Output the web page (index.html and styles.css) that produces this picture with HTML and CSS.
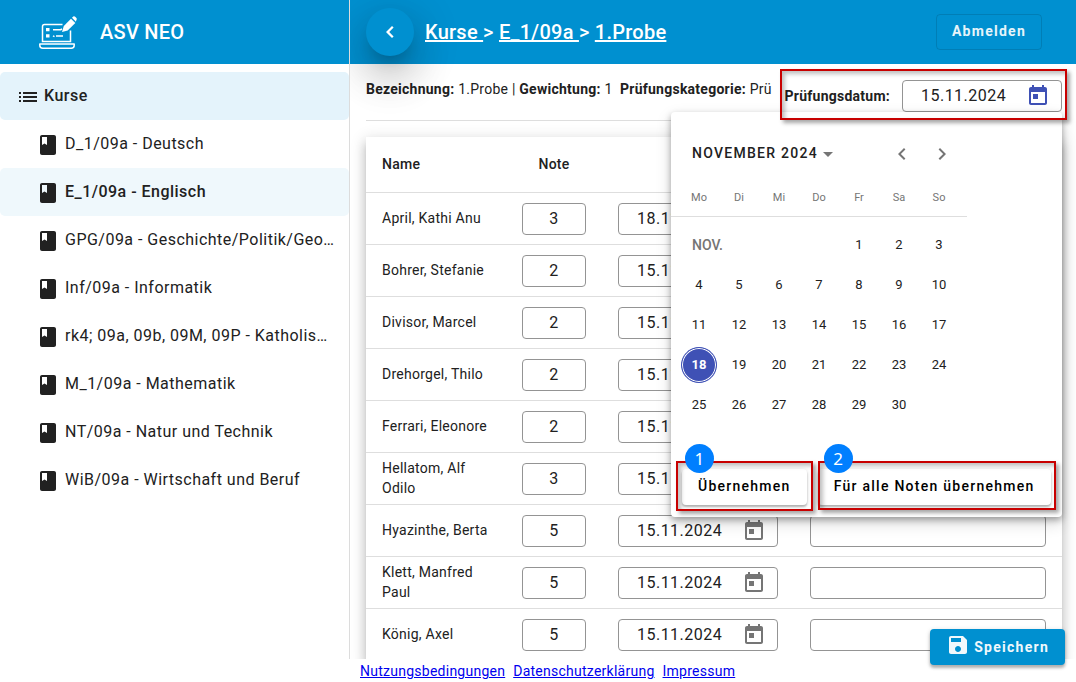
FILE: index.html
```html
<!DOCTYPE html>
<html lang="de">
<head>
<meta charset="utf-8">
<meta name="viewport" content="width=device-width, initial-scale=1">
<title>ASV NEO</title>
<link rel="stylesheet" href="styles.css">
</head>
<body>
<svg class="sprite" aria-hidden="true">
  <symbol id="book" viewBox="0 0 24 24"><path d="M18 2H6c-1.1 0-2 .9-2 2v16c0 1.1.9 2 2 2h12c1.1 0 2-.9 2-2V4c0-1.1-.9-2-2-2zM6 4h5v8l-2.500-1.500L6 12V4z"/></symbol>
  <symbol id="today" viewBox="0 0 24 24"><path d="M19 3h-1V1h-2v2H8V1H6v2H5c-1.110 0-1.990.9-1.990 2L3 19c0 1.100.890 2 2 2h14c1.100 0 2-.9 2-2V5c0-1.100-.9-2-2-2zm0 16H5V8h14v11zM7 10h5v5H7z"/></symbol>
</svg>
<div class="app">
  <aside class="sidebar">
    <header class="brand">
      <svg class="logo" viewBox="0 0 38 33" width="38" height="33" fill="none" stroke="#fff" aria-hidden="true">
        <path d="M23.500 8.500H5.500a2 2 0 0 0-2 2V25.500H31.500V14.500" stroke-width="1.500"/>
        <path d="M.8 28H35.200V29.200a3 3 0 0 1-3 3H3.800a3 3 0 0 1-3-3z" stroke-width="1.500" stroke-linejoin="round"/>
        <path d="M7 12h3.500v3.200H7zM7 18.200h3.500v3.200H7z" fill="#fff" stroke="none"/>
        <path d="M14 13.700h8M14 19.900l1.500.8M17 19.900h7M21.500 13.700l1.500-.7" stroke-width="1.500"/>
        <path d="M23 16l1.800-6L32 2.800l4.300 4.300-7.600 7.400z" fill="#fff" stroke="none"/>
        <path d="M33 1.800l1.200-1.200q1-.8 2 .1l1.200 1.200q.8 1 0 2L36.900 5.700z" fill="#fff" stroke="none"/>
      </svg>
      <span class="brand-name">ASV NEO</span>
    </header>
    <nav class="nav" aria-label="Kurse">
      <a class="nav-item nav-root" href="#"><svg class="icon" viewBox="0 0 24 24"><path d="M3 13h2v-2H3v2zm0 4h2v-2H3v2zm0-8h2V7H3v2zm4 4h14v-2H7v2zm0 4h14v-2H7v2zM7 7v2h14V7H7z"/></svg><span class="nav-text">Kurse</span></a>
      <a class="nav-item" href="#"><svg class="icon"><use href="#book"/></svg><span class="nav-text">D_1/09a - Deutsch</span></a>
      <a class="nav-item active" href="#"><svg class="icon"><use href="#book"/></svg><span class="nav-text">E_1/09a - Englisch</span></a>
      <a class="nav-item" href="#"><svg class="icon"><use href="#book"/></svg><span class="nav-text">GPG/09a - Geschichte/Politik/Geo…</span></a>
      <a class="nav-item" href="#"><svg class="icon"><use href="#book"/></svg><span class="nav-text">Inf/09a - Informatik</span></a>
      <a class="nav-item" href="#"><svg class="icon"><use href="#book"/></svg><span class="nav-text">rk4; 09a, 09b, 09M, 09P - Katholis…</span></a>
      <a class="nav-item" href="#"><svg class="icon"><use href="#book"/></svg><span class="nav-text">M_1/09a - Mathematik</span></a>
      <a class="nav-item" href="#"><svg class="icon"><use href="#book"/></svg><span class="nav-text">NT/09a - Natur und Technik</span></a>
      <a class="nav-item" href="#"><svg class="icon"><use href="#book"/></svg><span class="nav-text">WiB/09a - Wirtschaft und Beruf</span></a>
    </nav>
  </aside>
  <div class="content">
    <header class="topbar">
      <button class="fab" type="button" aria-label="Zurück"><svg class="icon" viewBox="0 0 24 24"><path d="M15.600 7.600L14 6 8 12l6 6 1.600-1.600L11.200 12z"/></svg></button>
      <div class="crumbs"><a href="#">Kurse&nbsp;</a>&gt; <a href="#">E_1/09a&nbsp;</a>&gt; <a href="#">1.Probe</a></div>
      <button class="logout" type="button">Abmelden</button>
    </header>
    <main class="main">
      <div class="info">
        <p class="info-text"><b>Bezeichnung:</b> 1.Probe | <b>Gewichtung:</b> 1 &nbsp;<b>Prüfungskategorie:</b> Prü</p>
        <div class="exam">
          <label class="exam-label" for="exam-date">Prüfungsdatum:</label>
          <div class="date-field open">
            <input class="date-input" id="exam-date" type="text" value="15.11.2024">
            <button class="icon-button" type="button" aria-label="Kalender öffnen"><svg class="icon"><use href="#today"/></svg></button>
          </div>
          <span class="frame frame-date"></span>
          <section class="picker" aria-label="Datum wählen">
            <div class="picker-head">
              <button class="period" type="button">NOVEMBER 2024<svg viewBox="0 0 10 5" width="10" height="5"><path d="M0 0h10L5 5z"/></svg></button>
              <button class="icon-button" type="button" aria-label="Vorheriger Monat"><svg class="icon" viewBox="0 0 24 24"><path d="M15.410 7.410L14 6l-6 6 6 6 1.410-1.410L10.830 12z"/></svg></button>
              <button class="icon-button" type="button" aria-label="Nächster Monat"><svg class="icon" viewBox="0 0 24 24"><path d="M10 6L8.590 7.410 13.170 12l-4.580 4.590L10 18l6-6z"/></svg></button>
            </div>
            <table class="calendar">
              <thead><tr><th>Mo</th><th>Di</th><th>Mi</th><th>Do</th><th>Fr</th><th>Sa</th><th>So</th></tr></thead>
              <tbody>
                <tr><td class="month" colspan="4">NOV.</td><td><button type="button">1</button></td><td><button type="button">2</button></td><td><button type="button">3</button></td></tr>
                <tr><td><button type="button">4</button></td><td><button type="button">5</button></td><td><button type="button">6</button></td><td><button type="button">7</button></td><td><button type="button">8</button></td><td><button type="button">9</button></td><td><button type="button">10</button></td></tr>
                <tr><td><button type="button">11</button></td><td><button type="button">12</button></td><td><button type="button">13</button></td><td><button type="button">14</button></td><td><button type="button">15</button></td><td><button type="button">16</button></td><td><button type="button">17</button></td></tr>
                <tr><td><button class="selected" type="button">18</button></td><td><button type="button">19</button></td><td><button type="button">20</button></td><td><button type="button">21</button></td><td><button type="button">22</button></td><td><button type="button">23</button></td><td><button type="button">24</button></td></tr>
                <tr><td><button type="button">25</button></td><td><button type="button">26</button></td><td><button type="button">27</button></td><td><button type="button">28</button></td><td><button type="button">29</button></td><td><button type="button">30</button></td><td></td></tr>
              </tbody>
            </table>
            <div class="actions">
              <div class="action"><button class="raised" type="button">Übernehmen</button><span class="frame frame-one"></span><span class="badge">1</span></div>
              <div class="action"><button class="raised" type="button">Für alle Noten übernehmen</button><span class="frame frame-two"></span><span class="badge">2</span></div>
            </div>
          </section>
        </div>
      </div>
      <div class="card">
        <table class="grades">
          <colgroup><col class="col-name"><col class="col-note"><col class="col-date"><col></colgroup>
          <thead><tr><th>Name</th><th class="center">Note</th><th aria-label="Datum"></th><th aria-label="Bemerkung"></th></tr></thead>
          <tbody id="rows"></tbody>
        </table>
      </div>
    </main>
  </div>
  <footer class="footer"><a href="#">Nutzungsbedingungen</a><a href="#">Datenschutzerklärung</a><a href="#">Impressum</a></footer>
  <button class="save" type="button"><svg class="icon" viewBox="0 0 24 24"><path d="M17 3H5c-1.110 0-2 .9-2 2v14c0 1.100.890 2 2 2h14c1.100 0 2-.9 2-2V7l-4-4zm-5 16c-1.660 0-3-1.340-3-3s1.340-3 3-3 3 1.340 3 3-1.340 3-3 3zm3-10H5V5h10v4z"/></svg>Speichern</button>
</div>
<script src="app.js"></script>
</body>
</html>
```
FILE: styles.css
```css
:root {
  --blue: #0090d0;
  --ink: #212121;
  --line: #dedede;
  --track-small: 0.018em;
  --track-body: 0.03em;
  --track-button: 0.09em;
}

* { box-sizing: border-box; }

body {
  margin: 0;
  color: var(--ink);
  background: #fff;
  font: 14px/20px Roboto, "Liberation Sans", sans-serif;
  letter-spacing: var(--track-small);
}

button, input {
  font: inherit;
  color: inherit;
  margin: 0;
}

button {
  padding: 0;
  border: 0;
  background: none;
  cursor: pointer;
}

.sprite { display: none; }

.icon {
  width: 24px;
  height: 24px;
  flex: none;
  display: block;
  fill: currentColor;
}

.app {
  position: relative;
  display: grid;
  grid-template-columns: 350px minmax(0, 1fr);
  grid-template-rows: minmax(0, 1fr) auto;
  height: 100vh;
}

/* Sidebar */
.sidebar {
  position: relative;
  z-index: 2;
  background: #fff;
  border-right: 1px solid #dcdcdc;
}

.brand {
  display: flex;
  align-items: center;
  gap: 23px;
  height: 64px;
  padding-left: 39px;
  background: var(--blue);
  color: #fff;
}

.brand-name {
  font-size: 20px;
  font-weight: 500;
}

.nav {
  display: flex;
  flex-direction: column;
  padding-top: 8px;
}

.nav-item {
  display: flex;
  align-items: center;
  gap: 5px;
  height: 48px;
  padding: 0 14px 0 36px;
  border-radius: 5px;
  color: inherit;
  text-decoration: none;
  font-size: 16px;
  letter-spacing: var(--track-body);
}

.nav-item .icon { margin-top: 2px; }

.nav-root {
  gap: 4px;
  padding-left: 16px;
  background: #e4f3fb;
  font-weight: 500;
}

.nav-item.active {
  background: #eff8fc;
  font-weight: 500;
}

.nav-text { white-space: nowrap; }

/* Top bar */
.content {
  display: flex;
  flex-direction: column;
  min-width: 0;
  min-height: 0;
}

.topbar {
  position: relative;
  z-index: 1;
  display: flex;
  align-items: center;
  flex: none;
  height: 64px;
  padding: 0 34px 0 16px;
  background: var(--blue);
  color: #fff;
}

.fab {
  display: grid;
  place-items: center;
  width: 48px;
  height: 48px;
  border-radius: 50%;
  background: var(--blue);
  box-shadow: 0 11px 15px -7px rgba(0, 0, 0, 0.2), 0 24px 38px 3px rgba(0, 0, 0, 0.14), 0 9px 46px 8px rgba(0, 0, 0, 0.12);
}

.crumbs {
  flex: 1;
  padding-left: 11px;
  font-size: 20px;
  font-weight: 500;
  line-height: 32px;
}

.crumbs a { color: inherit; }

.logout {
  height: 36px;
  padding: 0 15px 2px;
  border: 1px solid rgba(0, 0, 0, 0.12);
  border-radius: 4px;
  color: #e6f4fa;
  font-weight: 700;
  letter-spacing: var(--track-button);
}

/* Exam details */
.main {
  flex: 1;
  min-height: 0;
  overflow: hidden;
  padding: 0 14px 0 16px;
}

.info {
  display: flex;
  align-items: flex-start;
  gap: 10px;
  height: 57px;
  padding-top: 15px;
  border-bottom: 1px solid var(--line);
}

.info-text {
  flex: 1;
  min-width: 0;
  margin: 0;
  white-space: nowrap;
}

.info-text b, .exam-label { font-weight: 700; }

.exam {
  position: relative;
  display: flex;
  align-items: center;
  gap: 12px;
  height: 34px;
}

.date-field {
  display: flex;
  align-items: center;
  width: 160px;
  height: 32px;
  padding: 0 11px 0 18px;
  border: 1px solid #949494;
  border-radius: 4px;
  background: #fff;
}

.date-input, .text-input {
  min-width: 0;
  outline: none;
  font-size: 16px;
  letter-spacing: var(--track-body);
}

.date-input {
  flex: 1;
  width: 0;
  padding: 0;
  border: 0;
  background: none;
}

.text-input {
  display: block;
  width: 100%;
  height: 32px;
  padding: 0 8px;
  border: 1px solid #949494;
  border-radius: 4px;
  background: #fff;
}

.icon-button { color: #757575; }

.open .icon-button { color: #3f51b5; }

/* Date picker */
.picker {
  position: absolute;
  z-index: 3;
  top: 33px;
  right: 0;
  width: 391px;
  padding: 22px 10px 12px 0;
  border-radius: 4px;
  background: #fff;
  box-shadow: 0 3px 6px rgba(0, 0, 0, 0.3), 0 6px 16px rgba(0, 0, 0, 0.16);
}

.picker-head {
  display: flex;
  align-items: center;
  gap: 16px;
  width: 296px;
  height: 40px;
  padding: 0 13px 0 21px;
}

.period {
  display: flex;
  align-items: center;
  gap: 5px;
  margin-right: auto;
  padding-bottom: 2px;
  font-weight: 500;
  letter-spacing: var(--track-button);
  white-space: nowrap;
}

.period svg {
  margin-top: 2px;
  fill: #757575;
}

.calendar {
  table-layout: fixed;
  width: 296px;
  margin-bottom: 44px;
  padding: 0 8px;
  border-spacing: 0;
  background: linear-gradient(var(--line), var(--line)) 0 42px / 100% 1px no-repeat;
  font-size: 13px;
  letter-spacing: normal;
}

.calendar th {
  height: 51px;
  padding: 0;
  vertical-align: top;
  color: #757575;
  font-size: 11px;
  font-weight: 400;
  line-height: 48px;
}

.calendar td {
  height: 40px;
  padding: 0;
  text-align: center;
}

.calendar td button {
  width: 36px;
  height: 36px;
  border-radius: 50%;
}

.calendar .month {
  padding-left: 13px;
  text-align: left;
  color: #757575;
  font-size: 14px;
  font-weight: 500;
}

.calendar td .selected {
  border: 1px solid #3f51b5;
  background: #3f51b5;
  box-shadow: inset 0 0 0 1px #fff;
  color: #fff;
  font-weight: 700;
}

.actions {
  display: flex;
  gap: 11px;
  padding-left: 11px;
}

.action { position: relative; }

.raised {
  height: 36px;
  padding: 0 16px 2px;
  border-radius: 4px;
  color: #000;
  background: #fff;
  box-shadow: 0 2px 2px rgba(0, 0, 0, 0.24), 0 1px 4px rgba(0, 0, 0, 0.14);
  font-weight: 500;
  letter-spacing: var(--track-button);
  white-space: nowrap;
}

/* Callouts */
.frame {
  position: absolute;
  z-index: 4;
  border: 2px solid #c80000;
  box-shadow: 3px 3px 4px rgba(0, 0, 0, 0.35), inset 3px 3px 4px rgba(0, 0, 0, 0.25);
  pointer-events: none;
}

.frame-date { inset: -10px -5px -7px; }
.frame-one { inset: -8px -6px -6px; }
.frame-two { inset: -8px -5px -5px 0; }

.badge {
  position: absolute;
  z-index: 5;
  top: -25px;
  left: 3px;
  width: 29px;
  height: 29px;
  border-radius: 50%;
  background: #007fff;
  color: #fff;
  font: 17px/29px "Noto Sans", sans-serif;
  text-align: center;
}

.action + .action .badge { left: 6px; }

/* Grades */
.card {
  margin-top: 16px;
  background: #fff;
  box-shadow: 0 5px 5px -3px rgba(0, 0, 0, 0.2), 0 8px 10px 1px rgba(0, 0, 0, 0.14), 0 3px 14px 2px rgba(0, 0, 0, 0.12);
}

.grades {
  table-layout: fixed;
  width: 100%;
  border-spacing: 0;
}

.col-name { width: 140px; }
.col-note { width: 96px; }
.col-date { width: 192px; }

.grades th, .grades td {
  height: 52px;
  padding: 0 16px;
  border-bottom: 1px solid var(--line);
  text-align: left;
}

.grades th {
  height: 56px;
  padding-bottom: 2px;
  font-weight: 500;
}

.grades td:first-child { padding-bottom: 2px; }

.grades .center { text-align: center; }

.grades .text-input.note { text-align: center; }

/* Footer and save */
.footer {
  grid-column: 1 / -1;
  display: flex;
  gap: 8px;
  padding: 2px 0 1px 360px;
  background: #fff;
}

.footer a { color: #00e; }

.save {
  position: absolute;
  z-index: 6;
  right: 11px;
  bottom: 17px;
  display: flex;
  align-items: center;
  gap: 4px;
  height: 36px;
  padding: 0 16px;
  border-radius: 4px;
  background: var(--blue);
  box-shadow: 0 3px 3px rgba(0, 0, 0, 0.25), 0 1px 5px rgba(0, 0, 0, 0.15);
  color: #f0f8fc;
  font-weight: 700;
  letter-spacing: var(--track-button);
}

.save .icon { margin-bottom: 4px; }
```
FILE: app.js
```js
const grades = [
  ["April, Kathi Anu", 3, "18.11.2024"],
  ["Bohrer, Stefanie", 2, "15.11.2024"],
  ["Divisor, Marcel", 2, "15.11.2024"],
  ["Drehorgel, Thilo", 2, "15.11.2024"],
  ["Ferrari, Eleonore", 2, "15.11.2024"],
  ["Hellatom, Alf Odilo", 3, "15.11.2024"],
  ["Hyazinthe, Berta", 5, "15.11.2024"],
  ["Klett, Manfred Paul", 5, "15.11.2024"],
  ["König, Axel", 5, "15.11.2024"]
];

document.getElementById("rows").innerHTML = grades.map(([name, note, date]) => `
  <tr>
    <td>${name}</td>
    <td><input class="text-input note" type="text" value="${note}" aria-label="Note ${name}"></td>
    <td><div class="date-field">
      <input class="date-input" type="text" value="${date}" aria-label="Datum ${name}">
      <button class="icon-button" type="button" aria-label="Kalender ${name}"><svg class="icon"><use href="#today"/></svg></button>
    </div></td>
    <td><input class="text-input" type="text" aria-label="Bemerkung ${name}"></td>
  </tr>`).join("");
```
